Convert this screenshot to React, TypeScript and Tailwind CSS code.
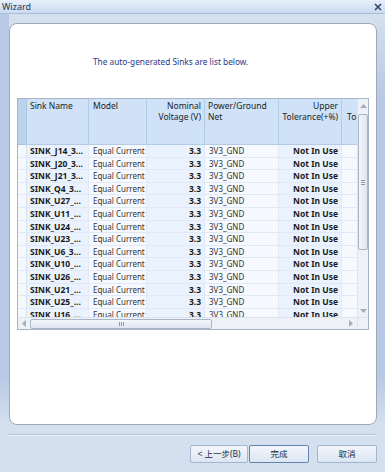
import React from 'react';

const sinks = [
  'SINK_J14_3...',
  'SINK_J20_3...',
  'SINK_J21_3...',
  'SINK_Q4_3...',
  'SINK_U27_...',
  'SINK_U11_...',
  'SINK_U24_...',
  'SINK_U23_...',
  'SINK_U6_3...',
  'SINK_U10_...',
  'SINK_U26_...',
  'SINK_U21_...',
  'SINK_U25_...',
  'SINK_U16_...',
];

const Arrow = ({ dir }: { dir: 'up' | 'down' | 'left' | 'right' }) => {
  const pts = {
    up: '0,4 3.5,0 7,4',
    down: '0,0 3.5,4 7,0',
    left: '4,0 0,3.5 4,7',
    right: '0,0 4,3.5 0,7',
  }[dir];
  const vert = dir === 'up' || dir === 'down';
  return (
    <svg width={vert ? 7 : 4} height={vert ? 4 : 7} viewBox={vert ? '0 0 7 4' : '0 0 4 7'}>
      <polygon points={pts} fill="#a3afbf" />
    </svg>
  );
};

const VScroll = () => (
  <div className="w-[11px] shrink-0 flex flex-col items-center bg-[#eef2f7] border-l border-[#dde4ee]">
    <div className="h-[13px] flex items-center justify-center">
      <Arrow dir="up" />
    </div>
    <div className="mt-[2px] w-[10px] h-[136px] rounded-[2px] border border-[#a9b6c8] bg-gradient-to-r from-[#f4f7fb] to-[#dfe6f0] flex flex-col items-center justify-center gap-[1px]">
      <div className="w-[4px] h-[1px] bg-[#8d9aad]" />
      <div className="w-[4px] h-[1px] bg-[#8d9aad]" />
      <div className="w-[4px] h-[1px] bg-[#8d9aad]" />
    </div>
    <div className="flex-1" />
    <div className="h-[12px] flex items-center justify-center">
      <Arrow dir="down" />
    </div>
  </div>
);

const HScroll = () => (
  <div className="w-[339px] shrink-0 flex items-center bg-[#eef2f7] border-t border-[#dde4ee]">
    <div className="w-[12px] flex items-center justify-center">
      <Arrow dir="left" />
    </div>
    <div className="w-[182px] h-[10px] rounded-[2px] border border-[#a9b6c8] bg-gradient-to-b from-[#f4f7fb] to-[#dfe6f0] flex items-center justify-center gap-[1px]">
      <div className="w-[1px] h-[4px] bg-[#8d9aad]" />
      <div className="w-[1px] h-[4px] bg-[#8d9aad]" />
      <div className="w-[1px] h-[4px] bg-[#8d9aad]" />
    </div>
    <div className="flex-1" />
    <div className="w-[12px] flex items-center justify-center">
      <Arrow dir="right" />
    </div>
  </div>
);

const SinkTable = () => (
  <div className="ml-[7px] mt-[30px] w-[352px] h-[232px] border border-[#a5b4c8] flex flex-col bg-white">
    <div className="flex h-[218px]">
      <div className="w-[339px] shrink-0 overflow-hidden flex flex-col">
        {/* header */}
        <div className="flex h-[46px] shrink-0 text-[8.5px] leading-[11px] text-[#222]">
          <div className="w-[9px] shrink-0 bg-[#bcd3ee] border-r border-b border-[#aac3e1]" />
          <div className="w-[62px] shrink-0 bg-[#cfe2f8] border-r border-b border-[#b3cbe6] pl-[3px] pt-[1px]">Sink Name</div>
          <div className="w-[58px] shrink-0 bg-[#cfe2f8] border-r border-b border-[#b3cbe6] pl-[4px] pt-[1px]">Model</div>
          <div className="w-[58px] shrink-0 bg-[#cfe2f8] border-r border-b border-[#b3cbe6] pr-[3px] pt-[1px] text-right whitespace-nowrap">
            Nominal
            <br />
            Voltage (V)
          </div>
          <div className="w-[74px] shrink-0 bg-[#cfe2f8] border-r border-b border-[#b3cbe6] pl-[3px] pt-[1px] whitespace-nowrap">
            Power/Ground
            <br />
            Net
          </div>
          <div className="w-[63px] shrink-0 bg-[#cfe2f8] border-r border-b border-[#b3cbe6] pr-[3px] pt-[1px] text-right whitespace-nowrap">
            Upper
            <br />
            Tolerance(+%)
          </div>
          <div className="w-[15px] shrink-0 bg-[#cfe2f8] border-b border-[#b3cbe6] pl-[5px] pt-[12px] overflow-hidden whitespace-nowrap">
            To
          </div>
        </div>
        {/* rows */}
        {sinks.map((name) => (
          <div key={name} className="flex h-[12.6px] shrink-0 text-[8.5px] leading-[11px] text-[#1a1a1a] border-b border-[#e0e9f5]">
            <div className="w-[9px] shrink-0 bg-[#f4f8fd] border-r border-[#d7e3f1]" />
            <div className="w-[62px] shrink-0 bg-[#eaf3fd] border-r border-[#e0e9f5] pl-[3px] font-bold whitespace-nowrap overflow-hidden">{name}</div>
            <div className="w-[58px] shrink-0 bg-[#f6faff] border-r border-[#e0e9f5] pl-[4px] text-[8px] text-[#333] whitespace-nowrap overflow-hidden">Equal Current</div>
            <div className="w-[58px] shrink-0 bg-[#eaf3fd] border-r border-[#e0e9f5] pr-[3px] font-bold text-right">3.3</div>
            <div className="w-[74px] shrink-0 bg-[#f6faff] border-r border-[#e0e9f5] pl-[4px] text-[8px] text-[#333] whitespace-nowrap">3V3_GND</div>
            <div className="w-[63px] shrink-0 bg-[#eaf3fd] border-r border-[#e0e9f5] pr-[3px] font-bold text-right whitespace-nowrap">Not In Use</div>
            <div className="w-[15px] shrink-0 bg-[#f6faff]" />
          </div>
        ))}
      </div>
      <VScroll />
    </div>
    <div className="flex h-[12px]">
      <HScroll />
      <div className="w-[11px] shrink-0 bg-[#eef2f7] border-t border-l border-[#dde4ee]" />
    </div>
  </div>
);

const Btn = ({ label, w, primary }: { label: string; w: string; primary?: boolean }) => (
  <button
    className={`${w} h-[18px] text-[8.5px] text-[#1d2a3d] rounded-[2px] bg-gradient-to-b from-[#f3f7fc] to-[#dbe5f2] border ${
      primary ? 'border-[#6483ad]' : 'border-[#a4b6cf]'
    } flex items-center justify-center whitespace-nowrap`}
  >
    {label}
  </button>
);

export default function App() {
  return (
    <div className="w-[385px] h-[472px] bg-[#d5e0ef] flex flex-col overflow-hidden font-['Noto_Sans','Noto_Sans_CJK_SC',sans-serif]">
      {/* title bar */}
      <div className="h-[14px] shrink-0 flex items-center justify-between pl-[2px] pr-[2px] bg-gradient-to-b from-[#e8f0fb] to-[#cbdaef] border-b border-[#a9bedb] text-[9px] leading-none text-[#1f3557]">
        <span>Wizard</span>
        <svg width="8" height="8" viewBox="0 0 8 8" className="mr-[1px]">
          <path d="M1 1 L7 7 M7 1 L1 7" stroke="#2b4872" strokeWidth="1.6" />
        </svg>
      </div>

      {/* body */}
      <div className="flex h-[411px] shrink-0">
        <div className="w-[9px] shrink-0 bg-[linear-gradient(to_bottom,#b8c9e5_0%,#b8c9e5_88%,#d5e0ef_100%)]" />
        <div className="w-[368px] shrink-0 pt-[9px]">
          <div className="h-[402px] bg-white rounded-[8px] border border-[#9ea8b6] flex flex-col">
            <div className="mt-[32px] pl-[83px] text-[8.3px] leading-[12px] text-[#27388a]">
              The auto-generated Sinks are list below.
            </div>
            <SinkTable />
          </div>
        </div>
        <div className="w-[8px] shrink-0 bg-[linear-gradient(to_bottom,#d5e0ef_0%,#b8c9e5_20%,#b8c9e5_88%,#d5e0ef_100%)]" />
      </div>

      {/* footer */}
      <div className="flex-1 flex flex-col">
        <div className="mt-[9px] mx-[8px] h-[1px] bg-[#bcc4cf]" />
        <div className="h-[1px] mx-[8px] bg-[#eef3f9]" />
        <div className="mt-[9px] flex justify-end pr-[8px]">
          <Btn label="< 上一步(B)" w="w-[58px]" />
          <div className="w-[1px]" />
          <Btn label="完成" w="w-[60px]" primary />
          <div className="w-[8px]" />
          <Btn label="取消" w="w-[60px]" />
        </div>
      </div>
    </div>
  );
}
